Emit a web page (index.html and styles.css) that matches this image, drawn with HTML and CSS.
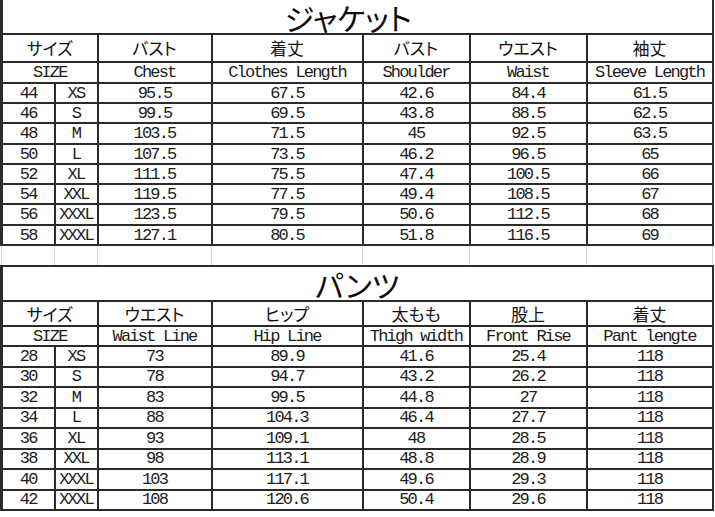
FILE: index.html
```html
<!DOCTYPE html>
<html lang="ja">
<head>
<meta charset="utf-8">
<title>サイズ表</title>
<link rel="stylesheet" href="styles.css">
</head>
<body>
<table class="chart">
  <colgroup>
    <col class="c-num"><col class="c-size"><col class="c-a"><col class="c-b"><col class="c-c"><col class="c-d"><col class="c-e">
  </colgroup>
  <tr class="title first"><td colspan="7">ジャケット</td></tr>
  <tr class="jp"><td colspan="2">サイズ</td><td>バスト</td><td>着丈</td><td>バスト</td><td>ウエスト</td><td>袖丈</td></tr>
  <tr class="en"><td colspan="2">SIZE</td><td>Chest</td><td>Clothes Length</td><td>Shoulder</td><td>Waist</td><td>Sleeve Length</td></tr>
  <tr class="d1"><td>44</td><td>XS</td><td>95.5</td><td>67.5</td><td>42.6</td><td>84.4</td><td>61.5</td></tr>
  <tr class="d1"><td>46</td><td>S</td><td>99.5</td><td>69.5</td><td>43.8</td><td>88.5</td><td>62.5</td></tr>
  <tr class="d1 tall"><td>48</td><td>M</td><td>103.5</td><td>71.5</td><td>45</td><td>92.5</td><td>63.5</td></tr>
  <tr class="d1"><td>50</td><td>L</td><td>107.5</td><td>73.5</td><td>46.2</td><td>96.5</td><td>65</td></tr>
  <tr class="d1"><td>52</td><td>XL</td><td>111.5</td><td>75.5</td><td>47.4</td><td>100.5</td><td>66</td></tr>
  <tr class="d1"><td>54</td><td>XXL</td><td>119.5</td><td>77.5</td><td>49.4</td><td>108.5</td><td>67</td></tr>
  <tr class="d1 tall"><td>56</td><td>XXXL</td><td>123.5</td><td>79.5</td><td>50.6</td><td>112.5</td><td>68</td></tr>
  <tr class="d1"><td>58</td><td>XXXL</td><td>127.1</td><td>80.5</td><td>51.8</td><td>116.5</td><td>69</td></tr>
  <tr class="gap"><td></td><td></td><td></td><td></td><td></td><td></td><td></td></tr>
  <tr class="title"><td colspan="7">パンツ</td></tr>
  <tr class="jp jp2"><td colspan="2">サイズ</td><td>ウエスト</td><td>ヒップ</td><td>太もも</td><td>股上</td><td>着丈</td></tr>
  <tr class="en en2"><td colspan="2">SIZE</td><td>Waist Line</td><td>Hip Line</td><td>Thigh width</td><td>Front Rise</td><td>Pant lengte</td></tr>
  <tr class="d2"><td>28</td><td>XS</td><td>73</td><td>89.9</td><td>41.6</td><td>25.4</td><td>118</td></tr>
  <tr class="d2"><td>30</td><td>S</td><td>78</td><td>94.7</td><td>43.2</td><td>26.2</td><td>118</td></tr>
  <tr class="d2"><td>32</td><td>M</td><td>83</td><td>99.5</td><td>44.8</td><td>27</td><td>118</td></tr>
  <tr class="d2"><td>34</td><td>L</td><td>88</td><td>104.3</td><td>46.4</td><td>27.7</td><td>118</td></tr>
  <tr class="d2"><td>36</td><td>XL</td><td>93</td><td>109.1</td><td>48</td><td>28.5</td><td>118</td></tr>
  <tr class="d2"><td>38</td><td>XXL</td><td>98</td><td>113.1</td><td>48.8</td><td>28.9</td><td>118</td></tr>
  <tr class="d2"><td>40</td><td>XXXL</td><td>103</td><td>117.1</td><td>49.6</td><td>29.3</td><td>118</td></tr>
  <tr class="d2"><td>42</td><td>XXXL</td><td>108</td><td>120.6</td><td>50.4</td><td>29.6</td><td>118</td></tr>
</table>
</body>
</html>
```
FILE: styles.css
```css
html, body {
  margin: 0;
  padding: 0;
  background: #ffffff;
}

.chart {
  border-collapse: collapse;
  table-layout: fixed;
  width: 711px;
  color: #1c1c1c;
  font-family: "Liberation Mono", "Noto Sans CJK JP", monospace;
}

.c-num { width: 53px; }
.c-size { width: 43px; }
.c-a { width: 114px; }
.c-b { width: 151px; }
.c-c { width: 107px; }
.c-d { width: 117px; }
.c-e { width: 126px; }

.chart td {
  border: 2px solid #2b2b2b;
  padding: 0;
  text-align: center;
  vertical-align: middle;
  white-space: nowrap;
  font-size: 17px;
  letter-spacing: -1.8px;
  line-height: 1;
}

.chart td:first-child {
  border-left: 3px solid #2b2b2b;
}

.title td {
  height: 32px;
  padding-top: 1px;
  font-family: "Noto Sans CJK JP", sans-serif;
  font-size: 30px;
  letter-spacing: 0;
  font-feature-settings: "palt";
  line-height: 32px;
  color: #0a0a0a;
}

.title.first td {
  border-top: none;
  padding-right: 18px;
}

.jp td {
  height: 26px;
  font-family: "Noto Sans CJK JP", sans-serif;
  font-size: 17px;
  letter-spacing: 0;
  font-feature-settings: "palt";
  line-height: 26px;
  color: #111;
}

.jp2 td {
  height: 23px;
  line-height: 23px;
}

.en td {
  height: 19px;
}

.en2 td {
  height: 18px;
}

.d1 td {
  height: 18px;
}

.d1.tall td {
  height: 19px;
}

.d2 td {
  height: 18.5px;
}

.gap td {
  height: 19px;
  border-left: 1px solid #d6d6d6;
  border-right: 1px solid #d6d6d6;
}

.gap td:first-child {
  border-left: 1px solid #d6d6d6;
}
```
